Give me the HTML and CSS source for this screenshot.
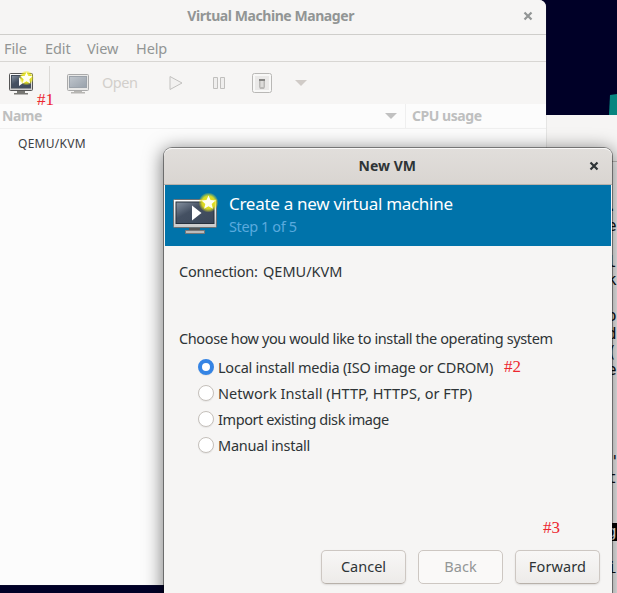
FILE: index.html
```
<!DOCTYPE html>
<html lang="en">
<head>
<meta charset="utf-8">
<title>Virtual Machine Manager</title>
<link rel="stylesheet" href="styles.css">
</head>
<body>
<svg width="0" height="0" class="defs">
  <defs>
    <linearGradient id="frame" x2="0" y2="1"><stop stop-color="#fff"/><stop offset="1" stop-color="#c9c9c9"/></linearGradient>
    <linearGradient id="screen" x2="1" y2="1"><stop stop-color="#8994a3"/><stop offset=".4" stop-color="#445062"/><stop offset="1" stop-color="#3c485a"/></linearGradient>
    <linearGradient id="screenOff" x2="1" y2="1"><stop stop-color="#c0c6cd"/><stop offset="1" stop-color="#98a1ab"/></linearGradient>
    <radialGradient id="glow"><stop stop-color="#f2ee20"/><stop offset=".65" stop-color="#e9e51b" stop-opacity=".9"/><stop offset="1" stop-color="#e9e51b" stop-opacity="0"/></radialGradient>
  </defs>
</svg>
<div class="desktop">
  <svg class="wallpaper" width="8" height="28" viewBox="0 0 8 28"><path d="M1 8 8 7V28H0Z" fill="#07857f"/></svg>

  <section class="terminal">
    <div class="terminal-bar"></div>
    <div class="terminal-text">
      <span class="l1">.</span><span class="l2">e</span><span class="l3">l</span><span class="l4">k'</span><span class="l5">o</span><span class="l6">d</span><span class="l7">(</span><span class="l8">e</span><span class="l9">'</span><span class="l10">t</span><span class="l11">g</span><span class="l12">i</span>
    </div>
  </section>

  <section class="manager">
    <header class="manager-title"><span class="t-title">Virtual Machine Manager</span>
      <svg class="close" width="10" height="10" viewBox="0 0 10 10"><path d="M1.5 1.5 8.5 8.5M8.5 1.5 1.5 8.5"/></svg>
    </header>
    <nav class="menu"><span class="m-file">File</span><span class="m-edit">Edit</span><span class="m-view">View</span><span class="m-help">Help</span></nav>
    <div class="toolbar">
      <svg class="new" width="26" height="26" viewBox="0 0 26 26">
        <rect x="1.5" y="3.5" width="23" height="17" rx="1" fill="url(#frame)" stroke="#555"/>
        <rect x="3.5" y="5.5" width="19" height="12.500" fill="url(#screen)" stroke="#444e5b"/>
        <path d="M11 7.500 17 11.500 11 16Z" fill="#fff"/>
        <path d="M9 21H17V23H20V24.500H6V23H9Z" fill="#767672"/>
        <circle cx="18.500" cy="8" r="7.500" fill="url(#glow)"/>
        <path d="m18.500 2 1.700 3.800 4.300.5-3.100 2.900.8 4.300-3.700-2.200-3.700 2.200.8-4.300-3.100-2.900 4.300-.5Z" fill="#fffff2"/>
      </svg>
      <i class="sep"></i>
      <svg class="display" width="26" height="24" viewBox="0 0 26 24">
        <rect x="2.500" y="3.500" width="21" height="16" rx="1" fill="#e8e8e7" stroke="#aaa"/>
        <rect x="4.500" y="5.500" width="17" height="11" fill="url(#screenOff)" stroke="#9ba2aa"/>
        <path d="M9 20H17V21H20V22.500H6V21H9Z" fill="#b7b6b3"/>
      </svg>
      <span class="t-open">Open</span>
      <svg class="play" width="16" height="18" viewBox="0 0 16 18"><path d="M2 2.500V15.500L14 9Z" fill="#f2f1f0" stroke="#c2c1bf"/></svg>
      <svg class="pause" width="14" height="14" viewBox="0 0 14 14"><path d="M1.500 1.500H5.500V12.500H1.500ZM8.500 1.500H12.500V12.500H8.500Z" fill="#efeeed" stroke="#c0bfbd"/></svg>
      <svg class="power" width="22" height="22" viewBox="0 0 22 22"><rect x="1.500" y="1.500" width="19" height="19" rx="2" fill="#f8f8f7" stroke="#b9b8b6"/><rect x="4" y="4" width="14" height="14" fill="#eae9e8"/><path d="M8 7H14V15L13 17H9L8 15Z" fill="#b9b8b6"/><path d="M8 7H14V9H8Z" fill="#858583"/><path d="M9.500 9H12.500V15H9.500Z" fill="#dddcda"/></svg>
      <svg class="drop" width="12" height="6" viewBox="0 0 12 6"><path d="M0 0H12L6 6Z" fill="#d0cbc7"/></svg>
    </div>
    <div class="columns">
      <div class="col-name"><span class="t-name">Name</span><svg width="12" height="6" viewBox="0 0 12 6"><path d="M0 0H12L6 6Z" fill="#c1c1c1"/></svg></div>
      <div class="col-cpu"><span class="t-cpu">CPU usage</span></div>
    </div>
    <div class="row"><span class="t-row">QEMU/KVM</span></div>
    <b class="mark mark1">#1</b>
  </section>

  <section class="dialog">
    <header class="dialog-title"><span class="t-new">New VM</span>
      <svg class="close" width="10" height="10" viewBox="0 0 10 10"><path d="M1.500 1.500 8.500 8.500M8.500 1.500 1.500 8.500"/></svg>
    </header>
    <div class="banner">
      <svg width="48" height="44" viewBox="0 0 48 44">
        <rect x="1.500" y="7.500" width="43" height="28" rx="1" fill="url(#frame)" stroke="#6c7275"/>
        <rect x="4" y="10" width="38" height="21.500" fill="url(#screen)" stroke="#27303c"/>
        <path d="M20 13.500V28.500L29.500 21Z" fill="#fff"/>
        <path d="M17 36H28V39H17Z" fill="#555"/><path d="M13.500 38.500H32.500V41.500H13.500Z" fill="#bbb" stroke="#777"/>
        <circle cx="36.500" cy="10.500" r="10" fill="url(#glow)"/>
        <path d="m36.500 3.500 2 4.600 5 .5-3.800 3.300 1.200 4.900-4.400-2.600-4.400 2.600 1.200-4.900-3.800-3.300 5-.5Z" fill="#fffff4"/>
      </svg>
      <div class="heading"><span class="t-create">Create a new virtual machine</span><span class="t-step">Step 1 of 5</span></div>
    </div>
    <div class="connection"><span class="t-conn">Connection:</span><span class="t-qemu">QEMU/KVM</span></div>
    <div class="question"><span class="t-choose">Choose how you would like to install the operating system</span></div>
    <div class="options">
      <label><i class="radio on"></i><span class="t-local">Local install media (ISO image or CDROM)</span><b class="mark mark2">#2</b></label>
      <label><i class="radio"></i><span class="t-net">Network Install (HTTP, HTTPS, or FTP)</span></label>
      <label><i class="radio"></i><span class="t-import">Import existing disk image</span></label>
      <label><i class="radio"></i><span class="t-manual">Manual install</span></label>
    </div>
    <b class="mark mark3">#3</b>
    <footer><button><span class="t-cancel">Cancel</span></button><button disabled><span class="t-back">Back</span></button><button><span class="t-forward">Forward</span></button></footer>
  </section>
</div>
</body>
</html>
```
FILE: styles.css
```
* { box-sizing: border-box; }
body { margin: 0; overflow: hidden; font: 14.5px/20px "Noto Sans", sans-serif; color: #2e3436; }
.defs { position: absolute; }
svg { display: block; flex: none; }
span { white-space: nowrap; }
.desktop { position: relative; width: 617px; height: 593px; overflow: hidden; background: #000027; }
.wallpaper { position: absolute; right: 0; top: 87px; }

.terminal { position: absolute; left: 500px; top: 115px; width: 117px; height: 478px; background: #fafafa; }
.terminal-bar { height: 47px; background: #f6f5f4; border-bottom: 1px solid #c5c2bf; }
.terminal-text { position: relative; height: 431px; font: 16px/18px "DejaVu Sans Mono", monospace; color: #111; }
.terminal-text span { position: absolute; left: 107px; }
.terminal-text .l1 { top: 35px; }
.terminal-text .l2 { top: 55px; }
.terminal-text .l3 { top: 91px; }
.terminal-text .l4 { top: 109px; letter-spacing: -3px; }
.terminal-text .l5 { top: 145px; }
.terminal-text .l6 { top: 163px; }
.terminal-text .l7 { top: 181px; }
.terminal-text .l8 { top: 199px; }
.terminal-text .l9 { top: 291px; left: 110px; }
.terminal-text .l10 { top: 307px; }
.terminal-text .l11 { top: 361px; width: 10px; background: #000; color: #fff; }
.terminal-text .l12 { top: 397px; }

.manager { position: absolute; left: 0; top: 0; width: 546px; height: 585px; background: #fcfcfc; border-radius: 0 7px 0 0; box-shadow: 0 0 1px #555; color: #929595; }
.manager-title { height: 35px; display: flex; align-items: center; justify-content: flex-end; padding: 0 13px 3px 0; gap: 169px; background: #f6f5f4; border-bottom: 1px solid #cfcecb; border-radius: 0 7px 0 0; font-size: 14px; font-weight: 700; }
.t-title { letter-spacing: -.43px; }
.close path { fill: none; stroke: currentColor; stroke-width: 2.200; }
.menu { height: 27px; display: flex; align-items: center; padding: 0 0 1px 4px; background: #f6f5f4; border-bottom: 1px solid #d8d6d3; letter-spacing: -.1px; }
.m-file { width: 41px; } .m-edit { width: 42px; } .m-view { width: 49px; }
.toolbar { height: 42px; display: flex; align-items: center; padding-left: 8px; background: #f6f5f4; color: #d2cfcb; }
.sep { width: 1px; height: 34px; margin: 0 15px 0 15px; background: #dbd9d6; }
.t-open { width: 52px; margin: 0 0 2px 11px; letter-spacing: -.5px; }
.play { margin-left: 14px; } .pause { margin-left: 28px; } .power { margin-left: 25px; } .drop { margin-left: 22px; }
.columns { height: 25px; display: flex; border-bottom: 1px solid #f0f0f0; color: #bebfbf; font-size: 14px; font-weight: 700; }
.col-name { width: 406px; display: flex; align-items: center; justify-content: space-between; padding: 0 8px 0 2px; border-right: 1px solid #efefef; }
.t-name { letter-spacing: -.5px; }
.t-cpu { letter-spacing: -.45px; }
.col-cpu { display: flex; align-items: center; padding-left: 6px; }
.row { padding: 5px 0 0 18px; font-size: 12px; letter-spacing: .28px; color: #3c4042; }
.mark { font: 17px/18px "Liberation Serif", serif; color: #ed2630; }
.mark1 { position: absolute; left: 37px; top: 91px; }

.dialog { position: absolute; left: 164px; top: 148px; width: 448px; height: 460px; padding: 0 1px; background: #f6f5f4; border-radius: 8px 8px 0 0; box-shadow: 0 0 0 1px rgba(0,0,0,.4), 0 3px 18px 2px rgba(0,0,0,.5); display: flex; flex-direction: column; }
.dialog-title { height: 37px; margin: 0 -1px; display: flex; align-items: center; justify-content: flex-end; gap: 173px; padding: 0 13px 1px 0; background: linear-gradient(#e1dedb, #d9d5d1); border-top: 1px solid #f9f8f7; border-bottom: 1px solid #b9b1aa; border-radius: 8px 8px 0 0; font-size: 14px; font-weight: 700; }
.banner { height: 61px; display: flex; align-items: flex-start; padding: 4px 0 0 7px; background: #0073aa; color: #fff; }
.banner svg { margin-top: 3px; }
.heading { display: flex; flex-direction: column; padding: 4px 0 0 9px; }
.t-create { font-size: 17px; line-height: 22px; letter-spacing: -.29px; }
.t-step { line-height: 22px; color: #5aaade; letter-spacing: -.4px; }
.connection { display: flex; padding: 15px 0 0 14px; }
.t-conn { width: 84px; letter-spacing: -.27px; }
.question { padding: 47px 0 0 14px; }
.t-choose { letter-spacing: -.385px; }
.options { padding: 6px 0 0 33px; }
.options label { display: flex; align-items: center; height: 26px; }
.t-local { width: 275px; letter-spacing: -.23px; }
.t-net { letter-spacing: .05px; }
.t-import { letter-spacing: -.42px; }
.t-manual { letter-spacing: -.23px; }
.radio { width: 16px; height: 16px; border: 1px solid #c5c0bb; border-radius: 50%; background: #fff; margin-right: 4px; flex: none; box-shadow: 0 1px 1px rgba(0,0,0,.06); }
.radio.on { border: 4px solid #3584e4; }
.mark2 { margin-left: 11px; }
.mark3 { margin: 61px 0 0 378px; }
footer { display: flex; gap: 12px; padding: 13px 0 0 156px; }
button { width: 85px; height: 34px; padding: 0 0 3px; border: 1px solid #cdc7c2; border-bottom-color: #b8b1aa; border-radius: 5px; background: linear-gradient(#f8f7f6, #edebe9); box-shadow: 0 1px 2px rgba(0,0,0,.1); color: #2e3436; font: 14.5px/20px "Noto Sans", sans-serif; }
.t-forward { letter-spacing: .12px; }
button:disabled { background: #faf9f8; color: #939696; border-color: #cdc7c2; box-shadow: none; }
```
